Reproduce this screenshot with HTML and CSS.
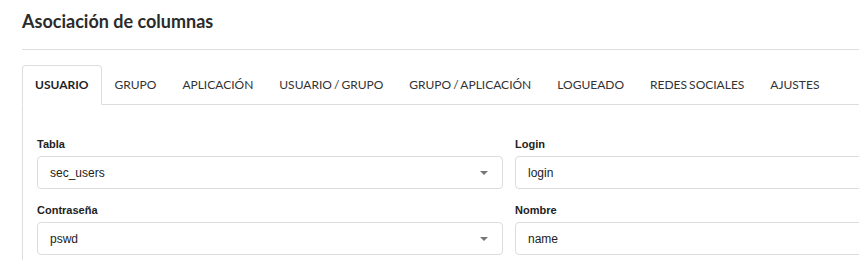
FILE: index.html
```html
<!DOCTYPE html>
<html lang="es">
<head>
<meta charset="utf-8">
<title>Asociación de columnas</title>
<link rel="stylesheet" href="styles.css">
</head>
<body>
<div class="page">
  <h1 class="title">Asociación de columnas</h1>
  <div class="tabs">
    <div class="tab active">USUARIO</div>
    <div class="tab">GRUPO</div>
    <div class="tab">APLICACIÓN</div>
    <div class="tab">USUARIO / GRUPO</div>
    <div class="tab">GRUPO / APLICACIÓN</div>
    <div class="tab">LOGUEADO</div>
    <div class="tab">REDES SOCIALES</div>
    <div class="tab">AJUSTES</div>
  </div>
  <div class="panel">
    <div class="grid">
      <div class="field">
        <label class="label">Tabla</label>
        <div class="control select"><span>sec_users</span><b class="arrow"></b></div>
      </div>
      <div class="field">
        <label class="label">Login</label>
        <div class="control"><span>login</span></div>
      </div>
      <div class="field">
        <label class="label">Contraseña</label>
        <div class="control select"><span>pswd</span><b class="arrow"></b></div>
      </div>
      <div class="field">
        <label class="label">Nombre</label>
        <div class="control"><span>name</span></div>
      </div>
    </div>
  </div>
</div>
</body>
</html>
```

FILE: styles.css
```css
html, body {
  margin: 0;
  padding: 0;
  background: #fff;
  overflow: hidden;
}
body {
  font-family: "Lato", "Liberation Sans", sans-serif;
  color: #333;
}
.page {
  width: 974px;
  padding: 9px 0 0 22px;
}
.title {
  margin: 0;
  font-size: 18px;
  line-height: 24px;
  font-weight: 700;
  color: #2b2b2b;
  padding-bottom: 16px;
  border-bottom: 1px solid #dedede;
}
.tabs {
  margin-top: 15px;
  display: flex;
  border-bottom: 1px solid #dddddd;
}
.tab {
  font-size: 12px;
  line-height: 38px;
  padding: 0 12px;
  border: 1px solid transparent;
  border-radius: 4px 4px 0 0;
  margin-bottom: -1px;
  color: #333;
  white-space: nowrap;
  word-spacing: -1px;
}
.tab.active {
  font-weight: 700;
  color: #1f1f1f;
  border-color: #dddddd #dddddd #fff #dddddd;
  background: #fff;
}
.panel {
  border: 1px solid #dddddd;
  border-top: none;
  padding: 32px 14px 20px;
}
.grid {
  display: grid;
  grid-template-columns: 1fr 1fr;
  column-gap: 12px;
  row-gap: 14px;
}
.label {
  display: block;
  font-family: "Liberation Sans", Arial, sans-serif;
  font-size: 11px;
  line-height: 15px;
  font-weight: 700;
  color: #222;
  margin-bottom: 4px;
}
.control {
  height: 33px;
  box-sizing: border-box;
  border: 1px solid #dcdcdc;
  border-radius: 4px;
  display: flex;
  align-items: center;
  padding: 0 12px;
  font-family: "Liberation Sans", Arial, sans-serif;
  font-size: 12px;
  color: #222;
}
.control span {
  flex: 1;
}
.arrow {
  width: 0;
  height: 0;
  border-style: solid;
  border-width: 4px 4px 0 4px;
  border-color: #777 transparent transparent transparent;
  margin-right: 2px;
}
```
